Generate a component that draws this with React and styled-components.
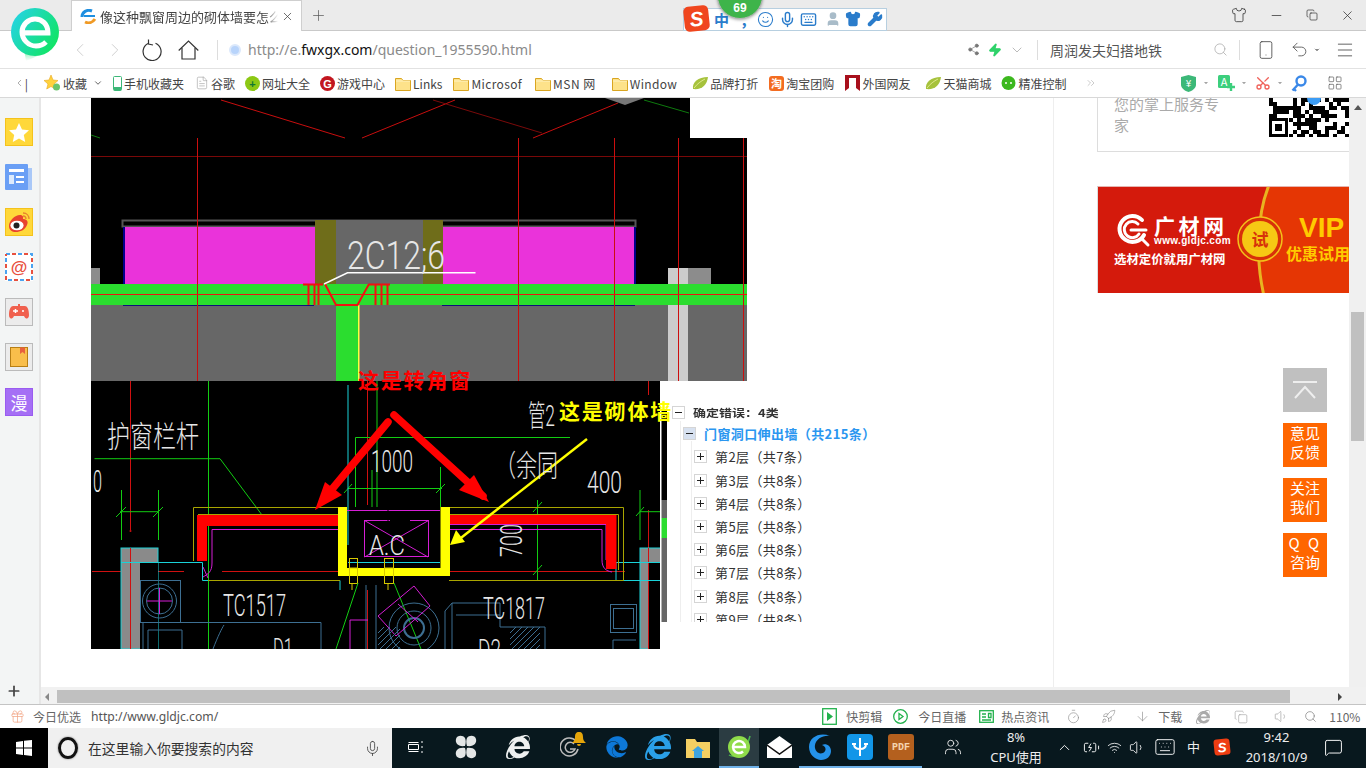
import React from 'react'
import styled, { createGlobalStyle } from 'styled-components'
import {
  ChevronLeft, ChevronRight, Share2, Zap, ChevronDown, Search, Smartphone, Undo2,
  Menu, Mic, Keyboard, Wrench, Shirt, Smile, User, Plus, X, Minus, Copy, Scissors, LayoutGrid,
  Wifi, Volume1, Gift, Timer, Rocket, ArrowDown, Users, MessageSquare, ChevronUp, ChevronsRight,
  BatteryCharging, FileText,
} from 'lucide-react'
import { FaInternetExplorer, FaEdge } from 'react-icons/fa'

const FONT = '"Noto Sans CJK SC", "Noto Sans", sans-serif'

const Global = createGlobalStyle`
html, body { margin: 0; padding: 0; background: #fff; }
body { font-family: ${FONT}; }
* { box-sizing: border-box; }
`

const Window = styled.div`
width: 1366px;
height: 768px;
position: relative;
overflow: hidden;
display: flex;
flex-direction: column;
color: #333;
`

/* ---------- tab strip ---------- */
const TabBar = styled.div`
height: 31px;
flex: none;
background: #ebebeb;
border-bottom: 1px solid #c9c9c9;
display: flex;
align-items: stretch;
padding-left: 71px;
`
const Tab = styled.div`
width: 231px;
height: 31px;
background: #fff;
border: 1px solid #cfcfcf;
border-bottom: none;
display: flex;
align-items: center;
padding-left: 8px;
font-size: 13px;
color: #444;
`
const TabTitle = styled.span`
width: 178px;
margin-left: 3px;
white-space: nowrap;
overflow: hidden;
-webkit-mask-image: linear-gradient(90deg, #000 93%, transparent);
mask-image: linear-gradient(90deg, #000 93%, transparent);
`
const TabClose = styled.span`
margin-left: 3px;
display: flex;
color: #444;
`
const NewTab = styled.span`
margin-left: 8px;
display: flex;
align-items: center;
color: #555;
`
const WinButtons = styled.div`
margin-left: auto;
display: flex;
align-items: center;
gap: 22px;
padding-right: 11px;
color: #333;
`

/* ---------- address bar ---------- */
const AddressBar = styled.div`
height: 37px;
flex: none;
background: #fff;
display: flex;
align-items: center;
`
const NavSlot = styled.span`
flex: none;
width: ${p => p.$w}px;
margin-left: ${p => p.$ml || 0}px;
display: flex;
align-items: center;
justify-content: center;
color: ${p => p.$c || '#444'};
`
const VSep = styled.span`
flex: none;
width: 1px;
height: 20px;
background: #ddd;
margin-left: ${p => p.$ml}px;
`
const GlobeDot = styled.span`
width: 12px;
height: 12px;
margin-left: 11px;
border-radius: 50%;
background: #b8d4fb;
border: 2px solid #dbe8fb;
`
const Url = styled.div`
margin-left: 7px;
width: 310px;
font-family: "Noto Sans", sans-serif;
font-size: 14px;
color: #8a8a8a;
b { font-weight: 400; color: #111; }
`
const SearchText = styled.div`
width: 160px;
margin-left: 12px;
font-size: 14px;
color: #555;
`

/* ---------- bookmarks ---------- */
const BookmarkBar = styled.div`
height: 30px;
flex: none;
background: #fff;
border-top: 1px solid #e2e2e2;
border-bottom: 1px solid #d8d8d8;
display: flex;
align-items: center;
font-size: 12px;
color: #444;
`
const Mark = styled.div`
flex: none;
display: flex;
align-items: center;
gap: 2px;
margin-left: ${p => p.$ml === undefined ? 10 : p.$ml}px;
white-space: nowrap;
letter-spacing: ${p => p.$ls || 0}px;
svg { flex: none; }
`

/* ---------- page body ---------- */
const Body = styled.div`
height: 606px;
flex: none;
display: flex;
`
const SideBar = styled.div`
width: 41px;
flex: none;
background: #f3f5f5;
border-right: 2px solid #e6e6e6;
display: flex;
flex-direction: column;
align-items: flex-start;
padding: 20px 0 0 5px;
gap: 17px;
`
const SideIcon = styled.div`
width: 28px;
height: 28px;
flex: none;
display: flex;
align-items: center;
justify-content: center;
font-size: 17px;
color: #fff;
background: ${p => p.$bg || 'transparent'};
border: ${p => p.$line ? `1px solid ${p.$line}` : 'none'};
`
const SideAdd = styled.div`
margin: auto 0 5px 1px;
display: flex;
color: #444;
`
const MainCol = styled.div`
width: 1325px;
flex: none;
display: flex;
flex-direction: column;
`
const PageRow = styled.div`
height: 589px;
flex: none;
display: flex;
position: relative;
background: #fff;
`
const Article = styled.div`
width: 1013px;
flex: none;
border-right: 1px solid #eee;
padding-left: 50px;
`
const CadStack = styled.div`
position: relative;
width: 900px;
display: flex;
flex-direction: column;
`
const CadImage = styled.svg`
display: block;
flex: none;
background: #000;
`
const CadRow = styled.div`
display: flex;
`
const CadNote = styled.span`
position: absolute;
left: ${p => p.$x}px;
top: ${p => p.$y}px;
font-size: 21px;
line-height: 22px;
font-weight: 700;
letter-spacing: 1.8px;
white-space: nowrap;
color: ${p => p.$c};
`
const CadLabel = styled.text`
font-family: Roboto, "Noto Sans CJK SC", sans-serif;
font-weight: 300;
fill: #e6e6e6;
font-size: ${p => p.$size || 26}px;
`

/* error tree */
const TreePanel = styled.div`
width: 224px;
height: 241px;
overflow: hidden;
background-image: linear-gradient(#eee, #eee), linear-gradient(#eee, #eee);
background-size: 1px 100%;
background-position: 13px 40px, 24px 60px;
background-repeat: no-repeat;
padding-top: 21px;
`
const TreeRow = styled.div`
height: ${p => p.$h}px;
display: flex;
align-items: center;
gap: 8px;
padding-left: ${p => p.$indent}px;
white-space: nowrap;
font-size: 13px;
letter-spacing: .4px;
font-weight: ${p => p.$bold ? 700 : 400};
color: ${p => p.$c || '#333'};
`
const TreeSquat = styled.span`
letter-spacing: 0;
display: inline-block;
transform: scaleY(.8);
`
const TreeBox = styled.span`
width: 13px;
height: 13px;
flex: none;
position: relative;
background: ${p => p.$bg || '#fff'};
border: 1px solid #d5d5d5;
&::before {
  content: '';
  position: absolute;
  left: 2px;
  right: 2px;
  top: 5px;
  height: 1px;
  background: #222;
}
&::after {
  content: '';
  display: ${p => p.$open ? 'none' : 'block'};
  position: absolute;
  top: 2px;
  bottom: 2px;
  left: 5px;
  width: 1px;
  background: #222;
}
`

/* right column */
const SidePane = styled.div`
width: 295px;
flex: none;
padding-left: 43px;
`
const AppCard = styled.div`
height: 54px;
overflow: hidden;
border-left: 1px solid #ddd;
border-bottom: 1px solid #ddd;
display: flex;
justify-content: space-between;
`
const AppText = styled.div`
width: 110px;
margin: -5px 0 0 16px;
font-size: 15px;
line-height: 21px;
color: #aaa;
`
const AdBanner = styled.div`
position: relative;
margin-top: 34px;
height: 107px;
overflow: hidden;
background: #d41a0c;
color: #fff;
border-left: 1px solid #ddd;
border-top: 1px solid #e5b5b0;
`
const AdArt = styled.svg`
position: absolute;
left: 0;
top: 0;
`
const AdBrand = styled.div`
position: absolute;
left: 56px;
top: 26px;
font-size: 21px;
line-height: 24px;
font-weight: 700;
letter-spacing: 3.5px;
`
const AdSite = styled.div`
position: absolute;
left: 56px;
top: 48px;
font-family: "Liberation Sans", sans-serif;
font-size: 10px;
line-height: 12px;
font-weight: 700;
letter-spacing: .35px;
`
const AdSlogan = styled.div`
position: absolute;
left: 16px;
top: 64px;
font-size: 12.4px;
line-height: 16px;
font-weight: 700;
white-space: nowrap;
`
const AdTry = styled.div`
position: absolute;
left: 152px;
top: 41px;
width: 20px;
text-align: center;
font-size: 17px;
line-height: 22px;
font-weight: 700;
color: #d7320a;
`
const AdVip = styled.div`
position: absolute;
left: 201px;
top: 25px;
font-family: "Liberation Sans", sans-serif;
font-size: 28px;
line-height: 32px;
font-weight: 700;
color: #ffcb00;
`
const AdOffer = styled.div`
position: absolute;
left: 188px;
top: 57px;
font-size: 16px;
line-height: 18px;
font-weight: 700;
white-space: nowrap;
color: #ffcb00;
`

const Floater = styled.div`
position: absolute;
left: 1242px;
top: 270px;
width: 44px;
display: flex;
flex-direction: column;
gap: 11px;
`
const FloatButton = styled.div`
height: 44px;
display: flex;
align-items: center;
justify-content: center;
text-align: center;
font-size: 15px;
line-height: 19px;
padding-bottom: ${p => p.$gray ? 0 : 6}px;
color: #fff;
background: ${p => p.$gray ? '#c0c0c0' : '#ff6600'};
`
const QqLine = styled.span`
letter-spacing: 2.5px;
`

const VScroll = styled.div`
width: 17px;
flex: none;
background: #f0f0f0;
display: flex;
flex-direction: column;
align-items: center;
padding-top: 7px;
color: #555;
`
const VThumb = styled.div`
width: 13px;
height: 129px;
margin-top: 202px;
background: #c0c0c0;
`
const HScroll = styled.div`
height: 17px;
flex: none;
background: #f1f1f1;
display: flex;
align-items: center;
padding: 2px 0 0 4px;
color: #666;
`
const HThumb = styled.div`
width: 1233px;
height: 13px;
margin-left: 8px;
background: #c0c0c0;
`
const HArrowEnd = styled.span`
margin-left: 48px;
`
const TriLeft = styled.span`
width: 0;
height: 0;
display: block;
border: 4px solid transparent;
border-right: 4px solid #888;
border-left: none;
`
const TriRight = styled.span`
width: 0;
height: 0;
display: block;
border: 4px solid transparent;
border-left: 4px solid #444;
border-right: none;
`
const TriUp = styled.span`
width: 0;
height: 0;
display: block;
border: 4px solid transparent;
border-bottom: 5px solid #555;
border-top: none;
`

/* ---------- status bar ---------- */
const StatusBar = styled.div`
height: 24px;
flex: none;
background: #fff;
border-top: 1px solid #c4c4c4;
display: flex;
align-items: center;
font-size: 12px;
color: #666;
`
const StatusItem = styled.span`
flex: none;
display: flex;
align-items: center;
margin-left: ${p => p.$ml || 0}px;
white-space: nowrap;
color: ${p => p.$c || 'inherit'};
`
const StatusUrl = styled.span`
font-family: "Noto Sans", sans-serif;
font-size: 12.2px;
color: #555;
`

/* ---------- taskbar ---------- */
const TaskBar = styled.div`
height: 40px;
flex: none;
background: #08181e;
display: flex;
align-items: stretch;
color: #fff;
`
const StartButton = styled.div`
width: 48px;
flex: none;
background: #000;
display: flex;
align-items: center;
justify-content: center;
`
const SearchBox = styled.div`
width: 344px;
flex: none;
background: #f0f0f0;
display: flex;
align-items: center;
padding-left: 10px;
font-size: 13.8px;
color: #333;
`
const Cortana = styled.span`
width: 20px;
height: 22px;
margin-right: 10px;
border-radius: 50%;
border: 3px solid #111;
box-shadow: 0 0 2px #777;
`
const SearchMic = styled.span`
margin-left: auto;
margin-right: 11px;
display: flex;
color: #333;
`
const TaskSlot = styled.div`
position: relative;
width: ${p => p.$w}px;
flex: none;
display: flex;
align-items: center;
justify-content: center;
background: ${p => p.$active ? '#2b3c42' : 'transparent'};
border-bottom: 2px solid ${p => p.$open ? '#6fb1e8' : 'transparent'};
`
const Bell = styled.svg`
position: absolute;
right: 10px;
top: 4px;
`
const TrayText = styled.div`
text-align: center;
font-size: 13px;
line-height: 20px;
color: #eee;
white-space: nowrap;
font-family: "Noto Sans", "Noto Sans CJK SC", sans-serif;
`
const PdfTile = styled.span`
width: 26px;
height: 26px;
border-radius: 3px;
background: #b4601e;
display: flex;
align-items: center;
justify-content: center;
font-family: "Liberation Mono", monospace;
font-size: 10px;
font-weight: 700;
color: #f5d4b0;
`
const SogouTile = styled.span`
width: ${p => p.$s}px;
height: ${p => p.$s}px;
border-radius: ${p => p.$s / 5}px;
transform: rotate(-6deg);
background: ${p => p.$bg || '#ef3d12'};
display: flex;
align-items: center;
justify-content: center;
font-family: "Liberation Sans", sans-serif;
font-weight: 700;
font-style: italic;
font-size: ${p => p.$s * 0.82}px;
color: #fff;
`

/* ---------- things that float over the chrome ---------- */
const AppLogo = styled.svg`
position: absolute;
left: 10px;
top: 6px;
`
const ImeBar = styled.div`
position: absolute;
left: 683px;
top: 8px;
width: 204px;
height: 23px;
background: #fff;
border: 1px solid #b7cfe0;
display: flex;
align-items: center;
color: #2a7ccb;
`
const ImeLogo = styled.span`
position: absolute;
left: 0;
top: -3px;
`
const ImeItem = styled.span`
position: absolute;
left: ${p => p.$x}px;
top: 2px;
display: flex;
font-size: 15px;
line-height: 18px;
font-weight: 700;
color: ${p => p.$c || '#2a7ccb'};
`
const Badge = styled.div`
position: absolute;
left: 717px;
top: -27px;
width: 46px;
height: 46px;
border-radius: 50%;
background: #3eb44a;
border: 1px solid #b8b8b8;
box-shadow: 0 1px 3px rgba(0,0,0,.35);
color: #fff;
font-family: "Liberation Sans", sans-serif;
font-size: 12px;
font-weight: 700;
text-align: center;
padding-top: 27px;
line-height: 14px;
`

/* ---------- small drawings ---------- */
const Folder = () => (
  <svg width="16" height="15" viewBox="0 0 16 15">
    <path d="M.5 2.500h6l1.500 2h7.500v10H.5z" fill="#fde28a" stroke="#d9a520" />
    <path d="M1 5h14" stroke="#fff3c4" />
  </svg>
)
const Leaf = () => (
  <svg width="16" height="14" viewBox="0 0 16 14">
    <path d="M1 13C0 6 6 1 16 1c-1 8-6 13-15 12z" fill="#a6c23c" />
    <path d="M2 12C5 8 9 5 13 3" stroke="#dfe88e" fill="none" />
  </svg>
)
const RoundIcon = ({ bg, c = '#fff', children }) => (
  <svg width="15" height="15" viewBox="0 0 15 15">
    <circle cx="7.500" cy="7.500" r="7.500" fill={bg} />
    <text x="7.500" y="11.500" fontSize="11" fontWeight="700" textAnchor="middle" fill={c} fontFamily="Liberation Sans">{children}</text>
  </svg>
)
const LogoMark = () => (
  <AppLogo width="50" height="58" viewBox="0 0 50 58">
    <defs>
      <linearGradient id="lg" x1="0" y1="0" x2="1" y2=".6">
        <stop offset="0" stopColor="#26d2f0" />
        <stop offset="1" stopColor="#12e468" />
      </linearGradient>
      <linearGradient id="lt" x1="0" y1="0" x2="0" y2="1">
        <stop offset="0" stopColor="#16e070" />
        <stop offset="1" stopColor="#ffffff" />
      </linearGradient>
    </defs>
    <path d="M44 36C38 46 28 50 16 55l-2-12z" fill="url(#lt)" />
    <circle cx="25" cy="26" r="24" fill="url(#lg)" />
    <path d="M13 27h25C38 18 32 13 25 13c-7 0-13 6-13 13s6 14 14 14c5 0 8-2 10-4" fill="none" stroke="#fff" strokeWidth="5" />
    <rect x="12" y="24.500" width="26" height="4" fill="#fff" />
  </AppLogo>
)
const ReloadIcon = () => (
  <svg width="20" height="22" viewBox="0 0 20 22" fill="none" stroke="#333" strokeWidth="1.200">
    <path d="M13.500 4.200A9 9 0 1 1 6 4.500" />
    <path d="M6.500 .5L6.500 5L11 6" />
  </svg>
)
const HomeIcon = () => (
  <svg width="21" height="20" viewBox="0 0 21 20" fill="none" stroke="#333" strokeWidth="1.200">
    <path d="M.7 10.500L10.500 1l9.800 9.500" />
    <path d="M4 8v11h13V8" />
  </svg>
)

/* blocky qr pattern for the app card */
const qrCells = () => {
  const out = []
  let s = 7919
  for (let y = 0; y < 10; y++) {
    for (let x = 0; x < 20; x++) {
      s = (s * 1103515245 + 12345) & 0x7fffffff
      if ((s >> 13) % 2 && !(x < 5 && y > 4)) out.push(<rect key={x + '-' + y} x={x * 4} y={y * 4} width="4" height="4" />)
    }
  }
  return out
}
const QrCode = () => (
  <svg width="80" height="39" viewBox="0 0 80 39" style={{ flex: 'none' }}>
    {qrCells()}
    <rect x="1.500" y="21.500" width="16" height="16" fill="#fff" stroke="#000" strokeWidth="3" />
    <rect x="6" y="26" width="7" height="7" />
    <circle cx="45" cy="0" r="7" fill="#3b9cf5" />
  </svg>
)

const Seg = ({ d, c, w = 1 }) => <path d={d} stroke={c} strokeWidth={w} fill="none" />

const CAD_RED = '#d01010'
const CAD_GREEN = '#12cc12'
const CAD_CYAN = '#1ad2d8'
const CAD_STEEL = '#3d6f92'
const CAD_PINK = '#d51ed5'
const CAD_OLIVE = '#a9a500'

/* upper drawing, page coordinates in the viewBox */
const CadUpper = () => (
  <CadImage width="656" height="283" viewBox="91 98 656 283">
    <rect x="690" y="98" width="57" height="40" fill="#fff" />
    <Seg d="M221 100L345 138M362 138L455 100M533 138L618 103" c="#c80e0e" />
    <Seg d="M433 100L542 133" c="#7a0a0a" />
    <Seg d="M644 100L689 113M91 135L100 138" c="#0e7a0e" />
    <polygon points="605,98 644,98 625,105" fill="#777" />
    <Seg d="M91 156.500H747" c="#7a0808" />

    <rect x="122.500" y="220.500" width="513" height="6" fill="#000" stroke="#555" strokeWidth="2" />
    <rect x="123" y="227" width="192" height="57" fill="#00008b" />
    <rect x="125" y="227" width="190" height="57" fill="#ea33da" />
    <rect x="442" y="227" width="194" height="57" fill="#00008b" />
    <rect x="442" y="227" width="192" height="57" fill="#ea33da" />
    <rect x="336" y="220" width="87" height="64" fill="#676767" />
    <rect x="315" y="220" width="21" height="64" fill="#6f6d1a" />
    <rect x="423" y="220" width="20" height="64" fill="#6f6d1a" />
    <rect x="91" y="268" width="9" height="16" fill="#8c8c8c" />
    <rect x="668" y="268" width="20" height="16" fill="#ccc" />
    <rect x="688" y="268" width="23" height="16" fill="#8c8c8c" />

    <rect x="91" y="305" width="656" height="76" fill="#676767" />
    <Seg d="M123 305.500H314M442 305.500H635" c="#10107a" />
    <rect x="668" y="305" width="20" height="76" fill="#ccc" />
    <rect x="91" y="284" width="656" height="21" fill="#2bdd2f" />
    <rect x="336" y="305" width="22" height="76" fill="#2bdd2f" />
    <rect x="358" y="305" width="1.500" height="76" fill="#ffff40" />

    <Seg d="M197.500 138V381M518.500 138V381M614.500 138V381M678.500 138V381M743.500 138V381" c="#cc0e0e" />
    <Seg d="M91 294.500H747" c="#ee1111" />
    <Seg d="M303 284.500H323M369 284.500H390M308.500 284V305M314.500 284V305M318.500 284V305M375.500 284V305M381.500 284V305M387.500 284V305" c="#f01111" w="2" />
    <Seg d="M325 284L336 305H357.500L369 284" c="#f01111" w="2" />
    <Seg d="M324 284L347.500 272.700H475.500" c="#fff" w="1.600" />
    <CadLabel $size={38} x="347" y="269" textLength="98" lengthAdjust="spacingAndGlyphs">2C12;6</CadLabel>
  </CadImage>
)

const hatch = (x, y, w, h) => {
  const p = []
  for (let i = 0; i < w + h; i += 6) {
    const a = Math.min(i, h)
    const b = Math.max(0, i - h)
    p.push(`M${x + Math.min(i, w)} ${y + Math.max(0, i - w)}L${x + b} ${y + a}`)
  }
  return p.join('')
}

/* lower drawing, page coordinates in the viewBox */
const CadLower = () => (
  <CadImage width="576" height="268" viewBox="91 381 576 268">
    {/* grid lines */}
    <Seg d="M130.500 381V530M367.500 381V505M367.500 590V649M648.500 510V649M648.500 381V395" c={CAD_RED} />
    <circle cx="130.500" cy="531" r="1" fill={CAD_RED} />
    <Seg d="M208.500 381V649" c={CAD_GREEN} />
    <Seg d="M92 571.500H184M222 571.500H340M449 571.500H625" c={CAD_RED} />
    <Seg d="M94.500 458.700H220L262 515" c={CAD_GREEN} />

    {/* dimensions */}
    <Seg d="M355.500 507V437.500H570M440.500 467V507M348 488.500H442M372 470V507M377 381V507" c={CAD_GREEN} />
    <Seg d="M120 511.700H158.500M121.500 490V540M158.500 490V540M640 490V540M640 511.700H661" c={CAD_GREEN} />
    <Seg d="M537.500 500V580M514 507.500H585M116 517L126 507M153 517L163 507M344 493L352 484M436 493L445 484M533 512L542 502M533 575L542 565M636 516L644 507" c={CAD_GREEN} />

    {/* columns */}
    <rect x="121" y="548" width="37" height="101" fill="#8a8a8a" stroke={CAD_CYAN} />
    <rect x="140" y="562" width="18" height="87" fill="#000" />
    <rect x="640" y="548" width="21" height="101" fill="#8a8a8a" stroke={CAD_CYAN} />
    <rect x="648" y="562" width="13" height="87" fill="#000" />
    <Seg d="M130.500 548V649M648.500 548V649" c={CAD_RED} />
    <Seg d="M121 562.500H202.500V580.500H340M348 562.500H440M616 562.500H661M340 580.500V590M449 580.500H625M616 562.500V580.500H661M348 385V545" c={CAD_CYAN} />

    {/* wall outline */}
    <Seg d="M193.500 561V507.500H340M450 507.500H623.500V580.500H449M340 580.500H208" c={CAD_OLIVE} />
    <Seg d="M198 514.500H340M450 514.500H618.500V570" c={CAD_OLIVE} />
    <Seg d="M212 563V529.500H338M450 529.500H602V560C602 568 606 571 612 572M450 524.500H606V560M212 563C212 572 208 574 203 577M203 567L208 578" c={CAD_PINK} />

    {/* red walls */}
    <polygon points="197,515 338,515 338,526 207,526 207,561 197,561" fill="#ff0000" />
    <polygon points="450,515 616.500,515 616.500,569 606,569 606,524 450,524" fill="#ff0000" />

    {/* opening */}
    <rect x="364.500" y="520.500" width="64" height="36" fill="none" stroke={CAD_PINK} />
    <Seg d="M364.500 520.500L428 557M364.500 557L428.500 520.500M347 510.500H440" c={CAD_PINK} />
    <Seg d="M388 524V507M390 520.500H410" c="#000" />
    <polygon points="338,507 347,507 347,568 440.500,568 440.500,507 450,507 450,576 338,576" fill="#ffff00" />
    <rect x="349.500" y="558.500" width="8" height="25" fill="none" stroke="#d6c800" />
    <rect x="384.500" y="558.500" width="9" height="25" fill="none" stroke="#d6c800" />
    <Seg d="M349.500 568H357.500M384.500 568H393.500" c="#d6c800" />
    <Seg d="M352 584V590M388 584V590" c="#d6c800" />
    <CadLabel $size={28} x="369" y="555" textLength="36" lengthAdjust="spacingAndGlyphs">A.C</CadLabel>

    {/* lower plan */}
    <rect x="140.500" y="580.500" width="40" height="42" fill="none" stroke={CAD_STEEL} />
    <circle cx="159.500" cy="601" r="17" fill="none" stroke={CAD_STEEL} />
    <circle cx="159.500" cy="601" r="13" fill="none" stroke={CAD_STEEL} />
    <Seg d="M147 601H172M159.500 588V614" c={CAD_PINK} />
    <Seg d="M143 649V622.500H321V649M148 649V630H182V649M213 649C218 636 222 628 224 625" c={CAD_STEEL} />
    <Seg d="M358 583L336 649M394 583L421 649" c={CAD_GREEN} />
    <Seg d="M366 585V649M376 585V649" c={CAD_STEEL} />
    <Seg d="M350 620H368M350 649V620" c={CAD_PINK} />
    <circle cx="414" cy="628" r="25" fill="none" stroke={CAD_STEEL} />
    <circle cx="414" cy="628" r="17" fill="none" stroke={CAD_STEEL} />
    <circle cx="414" cy="628" r="10" fill="none" stroke={CAD_STEEL} strokeWidth="2" />
    <Seg d="M378 616L414 586L430 606L396 636zM398 604L418 622" c={CAD_PINK} />
    <Seg d={hatch(378, 627, 22, 22)} c={CAD_STEEL} />
    <Seg d={hatch(510, 627, 30, 22)} c={CAD_STEEL} />
    <Seg d="M445 649V611L452 603H500V627H545V649M452 603V649M456 615H500" c={CAD_STEEL} />
    <rect x="610.500" y="604.500" width="26" height="28" fill="none" stroke={CAD_STEEL} />
    <rect x="613.500" y="608.500" width="20" height="20" fill="none" stroke={CAD_STEEL} />
    <Seg d="M613 649V640H636" c={CAD_STEEL} />

    {/* hand drawn arrows */}
    <g stroke="#ff0000" strokeWidth="7.500" strokeLinecap="round" fill="none">
      <path d="M388 422L323 500" />
      <path d="M394 415L483 496" />
    </g>
    <polygon points="315,510 325,482 342,495" fill="#ff0000" />
    <polygon points="489,502 474,475 459,490" fill="#ff0000" />
    <path d="M587 439L457 541" stroke="#ffff00" strokeWidth="2.500" />
    <polygon points="450,545 456,530 465,542" fill="#ffff00" />

    {/* cad labels */}
    <CadLabel $size={30} x="107" y="447" textLength="92" lengthAdjust="spacingAndGlyphs">护窗栏杆</CadLabel>
    <CadLabel $size={31} x="93" y="492" textLength="9" lengthAdjust="spacingAndGlyphs">0</CadLabel>
    <CadLabel $size={32} x="371" y="472" textLength="42" lengthAdjust="spacingAndGlyphs">1000</CadLabel>
    <CadLabel $size={30} x="495" y="476" textLength="63" lengthAdjust="spacingAndGlyphs">（余同</CadLabel>
    <CadLabel $size={32} x="587" y="493" textLength="35" lengthAdjust="spacingAndGlyphs">400</CadLabel>
    <CadLabel $size={30} x="528" y="426" textLength="27" lengthAdjust="spacingAndGlyphs">管2</CadLabel>
    <CadLabel $size={32} transform="translate(522 557) rotate(-90)" textLength="33" lengthAdjust="spacingAndGlyphs">700</CadLabel>
    <CadLabel $size={32} x="223" y="616" textLength="63" lengthAdjust="spacingAndGlyphs">TC1517</CadLabel>
    <CadLabel $size={32} x="483" y="619" textLength="62" lengthAdjust="spacingAndGlyphs">TC1817</CadLabel>
    <CadLabel $size={30} x="273" y="659" textLength="20" lengthAdjust="spacingAndGlyphs">D1</CadLabel>
    <CadLabel $size={30} x="478" y="660" textLength="23" lengthAdjust="spacingAndGlyphs">D2</CadLabel>

    {/* piece of the next picture */}
    <rect x="661" y="381" width="6" height="28" fill="#fff" />
    <rect x="661" y="622" width="6" height="27" fill="#fff" />
    <rect x="661" y="500" width="6" height="122" fill="#666" />
    <rect x="661" y="518" width="6" height="20" fill="#2bdd2f" />
    <rect x="660" y="381" width="1.500" height="268" fill="#fff" />
  </CadImage>
)

const AdPattern = () => (
  <AdArt width="252" height="107" viewBox="0 0 252 107">
    <path d="M171 -2C158 30 158 75 166 109H252V-2z" fill="#e53604" />
    <path d="M171 -2C158 30 158 75 166 109" fill="none" stroke="#e8b420" strokeWidth="3" />
    <circle cx="162" cy="52" r="22" fill="#d8300a" stroke="#f3c21a" strokeWidth="1.500" />
    <circle cx="162" cy="52" r="18" fill="#f6c814" />
    <g fill="none" stroke="#fff" strokeLinecap="round">
      <path d="M44 33A13 13 0 1 0 46 48" strokeWidth="4" />
      <path d="M40 37A8 8 0 1 0 41 47" strokeWidth="3" />
      <path d="M33 43H48" strokeWidth="3" />
      <path d="M44 52L50 58" strokeWidth="3" />
    </g>
  </AdArt>
)

const MiniWeibo = () => (
  <svg width="24" height="22" viewBox="0 0 24 22">
    <path d="M2 15C2 9 9 3 14 4c3 1 2 3 2 4 3 0 6 2 4 6-2 5-7 7-11 7-4 0-7-2-7-6z" fill="#e8432e" />
    <ellipse cx="10" cy="14.500" rx="6.600" ry="4.800" fill="#fff" />
    <circle cx="9.500" cy="14.500" r="3" fill="#222" />
    <path d="M16 2c4 0 6 3 6 6M16 5c2 0 3 1 3 3" stroke="#e8832e" strokeWidth="1.300" fill="none" />
  </svg>
)

const FLOORS = [['第2层', 7], ['第3层', 8], ['第4层', 8], ['第5层', 8], ['第6层', 8], ['第7层', 8], ['第8层', 8], ['第9层', 8]]

const App = () => {
  return (
    <Window>
      <Global />

      <TabBar>
        <Tab>
          <svg width="17" height="15" viewBox="0 0 17 15" style={{ flex: 'none' }}>
            <path d="M2 8C2 3 7 0 12 2" stroke="#1f8fe0" strokeWidth="3" fill="none" />
            <path d="M5 13c4 2 8 0 10-3" stroke="#f09a25" strokeWidth="3" fill="none" />
            <path d="M4 7h11" stroke="#1f8fe0" strokeWidth="2" />
          </svg>
          <TabTitle>像这种飘窗周边的砌体墙要怎么画</TabTitle>
          <TabClose><X size={13} strokeWidth={1.400} /></TabClose>
        </Tab>
        <NewTab><Plus size={17} strokeWidth={1} /></NewTab>
        <WinButtons>
          <Shirt size={16} strokeWidth={1.200} />
          <Minus size={15} strokeWidth={1.200} />
          <Copy size={12} strokeWidth={1.400} />
          <X size={15} strokeWidth={1.200} />
        </WinButtons>
      </TabBar>

      <AddressBar>
        <NavSlot $w={24} $ml={68} $c="#ccc"><ChevronLeft size={22} strokeWidth={1} /></NavSlot>
        <NavSlot $w={24} $ml={11} $c="#ccc"><ChevronRight size={22} strokeWidth={1} /></NavSlot>
        <NavSlot $w={24} $ml={13}><ReloadIcon /></NavSlot>
        <NavSlot $w={24} $ml={12}><HomeIcon /></NavSlot>
        <VSep $ml={17} />
        <GlobeDot />
        <Url>http://e.<b>fwxgx.com</b>/question_1955590.html</Url>
        <NavSlot $w={18} $ml={406} $c="#777"><Share2 size={13} fill="#777" strokeWidth={1.200} /></NavSlot>
        <NavSlot $w={18} $ml={4} $c="#2fd26a"><Zap size={14} fill="#2fd26a" /></NavSlot>
        <NavSlot $w={18} $ml={4} $c="#999"><ChevronDown size={16} strokeWidth={1} /></NavSlot>
        <VSep $ml={11} />
        <SearchText>周润发夫妇搭地铁</SearchText>
        <NavSlot $w={18} $ml={1} $c="#aaa"><Search size={15} strokeWidth={1.200} /></NavSlot>
        <VSep $ml={10} />
        <NavSlot $w={20} $ml={16}><Smartphone size={20} strokeWidth={1} /></NavSlot>
        <NavSlot $w={22} $ml={12}><Undo2 size={19} strokeWidth={1} /></NavSlot>
        <NavSlot $w={8} $ml={3} $c="#888"><ChevronDown size={8} fill="#888" /></NavSlot>
        <NavSlot $w={22} $ml={13}><Menu size={20} strokeWidth={1} /></NavSlot>
      </AddressBar>

      <BookmarkBar>
        <NavSlot $w={14} $ml={14}><ChevronLeft size={14} strokeWidth={1} /><span>|</span></NavSlot>
        <Mark $ml={16}>
          <svg width="17" height="16" viewBox="0 0 17 16"><path d="M7 0l2 5 5 .5-4 3.500 1.300 5L7 11.500 2.700 14 4 9 0 5.500 5 5z" fill="#ffd23c" stroke="#e8a820" strokeWidth=".6" /><circle cx="12.500" cy="12" r="3.500" fill="#6ac46a" /></svg>
          收藏<ChevronDown size={10} style={{ marginLeft: 4 }} />
        </Mark>
        <Mark $ml={10}>
          <svg width="9" height="15" viewBox="0 0 9 15"><rect x=".5" y=".5" width="8" height="14" rx="1" fill="#fff" stroke="#3cb878" /><rect x="1" y="11" width="7" height="3.500" fill="#3cb878" /></svg>
          手机收藏夹
        </Mark>
        <Mark $ml={11}><FileText size={14} strokeWidth={1} color="#999" />谷歌</Mark>
        <Mark><RoundIcon bg="#8cc814" c="#173">+</RoundIcon>网址大全</Mark>
        <Mark><RoundIcon bg="#c2161f">G</RoundIcon>游戏中心</Mark>
        <Mark><Folder />Links</Mark>
        <Mark $ml={11} $ls={0.35}><Folder />Microsof</Mark>
        <Mark $ml={13} $ls={0.5}><Folder />MSN 网</Mark>
        <Mark $ml={16} $ls={0.35}><Folder />Window</Mark>
        <Mark $ml={15}><Leaf />品牌打折</Mark>
        <Mark $ml={11}>
          <svg width="15" height="15" viewBox="0 0 15 15"><rect width="15" height="15" rx="3" fill="#f36c21" /><text x="7.500" y="12" fontSize="11" fontWeight="700" textAnchor="middle" fill="#fff">淘</text></svg>
          淘宝团购
        </Mark>
        <Mark $ml={11}>
          <svg width="15" height="16" viewBox="0 0 15 16"><path d="M0 0h15v16L11 13V3H4v10L0 16z" fill="#a8101c" /></svg>
          外国网友
        </Mark>
        <Mark $ml={15}><Leaf />天猫商城</Mark>
        <Mark>
          <svg width="15" height="15" viewBox="0 0 15 15"><circle cx="7.500" cy="7" r="7" fill="#3cb81e" /><path d="M3 13l1-3 3 2z" fill="#3cb81e" /><circle cx="5" cy="7" r="1" fill="#fff" /><circle cx="10" cy="7" r="1" fill="#fff" /></svg>
          精准控制
        </Mark>
        <NavSlot $w={12} $ml={19} $c="#999"><ChevronsRight size={12} strokeWidth={1} /></NavSlot>
        <NavSlot $w={16} $ml={83} $c="#3cb878">
          <svg width="15" height="17" viewBox="0 0 15 17"><path d="M0 2L7.500 0 15 2v8c0 3-4 6-7.500 7C4 16 0 13 0 10z" fill="#3cb878" /><text x="7.500" y="12" fontSize="10" textAnchor="middle" fill="#fff">¥</text></svg>
        </NavSlot>
        <NavSlot $w={6} $ml={7} $c="#888"><ChevronDown size={8} fill="#888" /></NavSlot>
        <NavSlot $w={17} $ml={9}>
          <svg width="17" height="17" viewBox="0 0 17 17"><rect width="12" height="13" rx="1.500" fill="#3ccf7d" /><text x="6" y="11" fontSize="11" textAnchor="middle" fill="#fff">A</text><path d="M9 12h8M13 8v8" stroke="#3ccf7d" strokeWidth="2.400" /></svg>
        </NavSlot>
        <NavSlot $w={6} $ml={6} $c="#888"><ChevronDown size={8} fill="#888" /></NavSlot>
        <NavSlot $w={16} $ml={8} $c="#f0625a"><Scissors size={16} strokeWidth={2} style={{ transform: 'rotate(-90deg)' }} /></NavSlot>
        <NavSlot $w={6} $ml={6} $c="#888"><ChevronDown size={8} fill="#888" /></NavSlot>
        <NavSlot $w={16} $ml={8}>
          <svg width="16" height="17" viewBox="0 0 16 17" fill="none" stroke="#3a88e8"><circle cx="10" cy="6" r="4.500" strokeWidth="2.400" /><path d="M7 9.500L1.500 15.500M3 14l2 2" strokeWidth="2.400" /></svg>
        </NavSlot>
        <NavSlot $w={16} $ml={20} $c="#555"><LayoutGrid size={16} strokeWidth={1} /></NavSlot>
      </BookmarkBar>

      <Body>
        <SideBar>
          <SideIcon $bg="#ffd83a" $line="#f4c21c">
            <svg width="20" height="19" viewBox="0 0 20 19"><path d="M10 0l3 6.500 7 .8-5.200 4.700L16.200 19 10 15.500 3.800 19l1.400-7L0 7.300l7-.8z" fill="#fff" /></svg>
          </SideIcon>
          <SideIcon>
            <svg width="28" height="27" viewBox="0 0 28 27"><rect x="20" y="4" width="7" height="22" fill="#a9c8f8" /><rect y="0" width="23" height="26" rx="1" fill="#6a9ff5" /><rect x="4" y="5" width="15" height="3" fill="#fff" /><rect x="4" y="11" width="5" height="9" fill="#dceafc" /><rect x="11" y="12" width="8" height="2" fill="#fff" /><rect x="11" y="17" width="8" height="2" fill="#fff" /></svg>
          </SideIcon>
          <SideIcon $bg="#ffd83a" $line="#f4c21c"><MiniWeibo /></SideIcon>
          <SideIcon $bg="#fff">
            <svg width="28" height="28" viewBox="0 0 28 28">
              <rect x="1" y="1" width="26" height="26" fill="none" stroke="#4aa3f0" strokeWidth="2" strokeDasharray="4 8" />
              <rect x="1" y="1" width="26" height="26" fill="none" stroke="#e8503e" strokeWidth="2" strokeDasharray="4 8" strokeDashoffset="6" />
              <text x="14" y="20" fontSize="17" fontWeight="700" textAnchor="middle" fill="#e8503e" fontFamily="Liberation Sans">@</text>
            </svg>
          </SideIcon>
          <SideIcon $bg="#ececec" $line="#bbb">
            <svg width="20" height="16" viewBox="0 0 20 16"><path d="M9 2V0h2v2h5c2 0 4 3 4 9 0 4-3 5-5 1H5c-2 4-5 3-5-1C0 5 2 2 4 2z" fill="#f0604e" /><path d="M4 7h5M6.500 5v4M13 7h2" stroke="#fff" strokeWidth="1.500" /></svg>
          </SideIcon>
          <SideIcon $bg="#ececec" $line="#bbb">
            <svg width="18" height="20" viewBox="0 0 18 20"><rect x=".5" y=".5" width="17" height="19" fill="#f9be4b" stroke="#b87f14" /><path d="M10 .5h5V7l-2.500-2L10 7z" fill="#e8603e" /></svg>
          </SideIcon>
          <SideIcon $bg="#a56ff5" $line="#9a5cf0">漫</SideIcon>
          <SideAdd><Plus size={16} strokeWidth={2.600} /></SideAdd>
        </SideBar>

        <MainCol>
          <PageRow>
            <Article>
              <CadStack>
                <CadUpper />
                <CadRow>
                  <CadLower />
                  <TreePanel>
                    <TreeRow $h={20} $indent={5} $bold>
                      <TreeBox $open /><TreeSquat>确定错误：4类</TreeSquat>
                    </TreeRow>
                    <TreeRow $h={23.400} $indent={16} $bold $c="#2a96f0">
                      <TreeBox $open $bg="#d7e1f0" />门窗洞口伸出墙（共215条）
                    </TreeRow>
                    {FLOORS.map(([name, n]) => (
                      <TreeRow key={name} $h={23.200} $indent={27}>
                        <TreeBox />{name}（共{n}条）
                      </TreeRow>
                    ))}
                  </TreePanel>
                </CadRow>
                <CadNote $x={267} $y={270} $c="#ff0000">这是转角窗</CadNote>
                <CadNote $x={468} $y={301} $c="#ffff00">这是砌体墙</CadNote>
              </CadStack>
            </Article>
            <SidePane>
              <AppCard>
                <AppText>您的掌上服务专家</AppText>
                <QrCode />
              </AppCard>
              <AdBanner>
                <AdPattern />
                <AdBrand>广材网</AdBrand>
                <AdSite>www.gldjc.com</AdSite>
                <AdSlogan>选材定价就用广材网</AdSlogan>
                <AdTry>试</AdTry>
                <AdVip>VIP</AdVip>
                <AdOffer>优惠试用</AdOffer>
              </AdBanner>
            </SidePane>
            <Floater>
              <FloatButton $gray>
                <svg width="26" height="18" viewBox="0 0 26 18"><path d="M1 1h24M3 17L13 6l10 11" fill="none" stroke="#eee" strokeWidth="2" /></svg>
              </FloatButton>
              <FloatButton>意见<br />反馈</FloatButton>
              <FloatButton>关注<br />我们</FloatButton>
              <FloatButton><span><QqLine>Q Q</QqLine><br />咨询</span></FloatButton>
            </Floater>
            <VScroll>
              <TriUp />
              <VThumb />
            </VScroll>
          </PageRow>
          <HScroll>
            <TriLeft />
            <HThumb />
            <HArrowEnd><TriRight /></HArrowEnd>
          </HScroll>
        </MainCol>
      </Body>

      <StatusBar>
        <StatusItem $ml={10} $c="#f2a585"><Gift size={15} strokeWidth={1.200} /></StatusItem>
        <StatusItem $ml={8}>今日优选</StatusItem>
        <StatusItem $ml={10}><StatusUrl>http://www.gldjc.com/</StatusUrl></StatusItem>
        <StatusItem $ml={604}>
          <svg width="15" height="17" viewBox="0 0 15 17" fill="none" stroke="#23b14d" strokeWidth="1.300"><rect x=".7" y=".7" width="13.600" height="15.600" /><path d="M5 4l6 4.500L5 13z" fill="#23b14d" stroke="none" /></svg>
        </StatusItem>
        <StatusItem $ml={9}>快剪辑</StatusItem>
        <StatusItem $ml={11}>
          <svg width="15" height="15" viewBox="0 0 15 15" fill="none" stroke="#23b14d" strokeWidth="1.300"><circle cx="7.500" cy="7.500" r="6.800" /><path d="M6 4.500l4 3-4 3z" /></svg>
        </StatusItem>
        <StatusItem $ml={10}>今日直播</StatusItem>
        <StatusItem $ml={13}>
          <svg width="15" height="15" viewBox="0 0 15 15" fill="none" stroke="#23b14d" strokeWidth="1.300"><rect x=".7" y="1.700" width="13.600" height="11.600" /><path d="M3 5h4M3 8h4M3 11h9M9.500 4.500h2.500v4H9.500z" /></svg>
        </StatusItem>
        <StatusItem $ml={7}>热点资讯</StatusItem>
        <StatusItem $ml={17} $c="#888"><Timer size={15} strokeWidth={1} /></StatusItem>
        <StatusItem $ml={20} $c="#888"><Rocket size={15} strokeWidth={1} /></StatusItem>
        <StatusItem $ml={19} $c="#888"><ArrowDown size={15} strokeWidth={1} /></StatusItem>
        <StatusItem $ml={8}>下载</StatusItem>
        <StatusItem $ml={14} $c="#aaa"><FaInternetExplorer size={14} /></StatusItem>
        <StatusItem $ml={24} $c="#999"><Copy size={14} strokeWidth={1} /></StatusItem>
        <StatusItem $ml={26} $c="#999"><Volume1 size={15} strokeWidth={1} /></StatusItem>
        <StatusItem $ml={15} $c="#777"><Search size={13} strokeWidth={1.200} /></StatusItem>
        <StatusItem $ml={12}>110%</StatusItem>
      </StatusBar>

      <TaskBar>
        <StartButton>
          <svg width="16" height="16" viewBox="0 0 16 16"><path d="M0 2l7-1v6.500H0zM8 .8L16 0v7.500H8zM0 8.500h7V15l-7-1zM8 8.500h8V16l-8-1z" fill="#fff" /></svg>
        </StartButton>
        <SearchBox>
          <Cortana />
          在这里输入你要搜索的内容
          <SearchMic><Mic size={17} strokeWidth={1.100} /></SearchMic>
        </SearchBox>
        <TaskSlot $w={48}>
          <svg width="16" height="16" viewBox="0 0 16 16" fill="none" stroke="#fff"><path d="M.5 3.500h10M.5 12.500h10M.5 5.500h10v5H.5zM14 2v2M14 7v2M14 12v2" /></svg>
        </TaskSlot>
        <TaskSlot $w={52}>
          <svg width="22" height="24" viewBox="0 0 22 24" fill="#e4e6e6"><path d="M10 11C3 12 0 8 1 4c1-4 7-4 9-1 1 2 1 5 0 8zM12 11c-1-3-1-6 0-8 2-3 8-3 9 1 1 4-2 8-9 7zM10 13c1 3 1 6 0 8-2 3-8 3-9-1-1-4 2-8 9-7zM12 13c7-1 10 3 9 7-1 4-7 4-9 1-1-2-1-5 0-8z" /></svg>
        </TaskSlot>
        <TaskSlot $w={52}><FaInternetExplorer size={24} color="#eef0f0" /></TaskSlot>
        <TaskSlot $w={52}>
          <svg width="20" height="20" viewBox="0 0 20 20" fill="none" stroke="#bbb" strokeWidth="1.500"><path d="M16 4A9 9 0 1 0 18 12M14 7A5 5 0 1 0 15 12H10" /></svg>
          <Bell width="14" height="15" viewBox="0 0 14 15"><path d="M7 0c3 0 4 2 4 5s1 4 3 6H0c2-2 3-3 3-6s1-5 4-5zM5 12h4a2 2 0 0 1-4 0z" fill="#e5a50a" /></Bell>
        </TaskSlot>
        <TaskSlot $w={42}><FaEdge size={22} color="#0d78d8" /></TaskSlot>
        <TaskSlot $w={39}><FaInternetExplorer size={26} color="#2aa0e8" /></TaskSlot>
        <TaskSlot $w={42}>
          <svg width="24" height="22" viewBox="0 0 24 22"><path d="M0 3h9l2 3h13v16H0z" fill="#f4cf62" /><path d="M8 15h8v7H8z" fill="#3da3e0" /><path d="M6 15l6-5 6 5z" fill="#3da3e0" /></svg>
        </TaskSlot>
        <TaskSlot $w={40} $active $open>
          <svg width="24" height="28" viewBox="0 0 24 28"><path d="M2 22C8 26 20 16 23 3" stroke="#4bb84f" strokeWidth="1.500" fill="none" /><circle cx="12" cy="14" r="11" fill="#8fdc4a" /><path d="M6 14h12a6 6 0 1 0-2 4.500" stroke="#fff" strokeWidth="2.500" fill="none" /></svg>
        </TaskSlot>
        <TaskSlot $w={40}>
          <svg width="25" height="22" viewBox="0 0 25 22"><path d="M0 9L12.500 0 25 9v13H0z" fill="#fff" /><path d="M0 9l12.500 9L25 9" stroke="#111" strokeWidth="1.500" fill="none" /></svg>
        </TaskSlot>
        <TaskSlot $w={41} $open>
          <svg width="24" height="28" viewBox="0 0 24 28"><path d="M22 3C12-1 1 4 1 14c0 8 7 13 12 13 6 0 10-4 10-9s-5-8-9-6c4 1 5 6 1 8-5 2-9-3-8-8 1-6 8-10 15-9z" fill="#2492ea" /></svg>
        </TaskSlot>
        <TaskSlot $w={40} $open>
          <svg width="26" height="26" viewBox="0 0 26 26"><rect width="26" height="26" rx="4" fill="#1296e8" /><path d="M13 4v18M7 10c0 4 3 5 6 5s6-1 6-5M5 10h4M17 10h4" stroke="#fff" strokeWidth="2" fill="none" /></svg>
        </TaskSlot>
        <TaskSlot $w={42} $open><PdfTile>PDF</PdfTile></TaskSlot>
        <TaskSlot $w={62}><Users size={18} strokeWidth={1.200} color="#eee" /></TaskSlot>
        <TaskSlot $w={64}>
          <TrayText>8%<br />CPU使用</TrayText>
        </TaskSlot>
        <TaskSlot $w={32}><ChevronUp size={17} strokeWidth={1.300} /></TaskSlot>
        <TaskSlot $w={22}><BatteryCharging size={17} strokeWidth={1.300} /></TaskSlot>
        <TaskSlot $w={24}><Wifi size={15} strokeWidth={1.300} /></TaskSlot>
        <TaskSlot $w={23}><Volume1 size={17} strokeWidth={1.200} /></TaskSlot>
        <TaskSlot $w={31}><Keyboard size={22} strokeWidth={1} /></TaskSlot>
        <TaskSlot $w={27}><TrayText>中</TrayText></TaskSlot>
        <TaskSlot $w={30}><SogouTile $s={16}>S</SogouTile></TaskSlot>
        <TaskSlot $w={79}><TrayText>9:42<br />2018/10/9</TrayText></TaskSlot>
        <TaskSlot $w={34}><MessageSquare size={19} strokeWidth={1.200} /></TaskSlot>
      </TaskBar>

      <LogoMark />
      <ImeBar>
        <ImeLogo><SogouTile $s={25} $bg="#f0461e">S</SogouTile></ImeLogo>
        <ImeItem $x={30}>中</ImeItem>
        <ImeItem $x={56} $c="#2a7ccb">，</ImeItem>
        <ImeItem $x={73}><Smile size={17} strokeWidth={1.500} /></ImeItem>
        <ImeItem $x={95}><Mic size={17} strokeWidth={2} /></ImeItem>
        <ImeItem $x={116}><Keyboard size={17} strokeWidth={2} /></ImeItem>
        <ImeItem $x={141} $c="#a9bcc9"><User size={16} fill="#a9bcc9" /></ImeItem>
        <ImeItem $x={161}><Shirt size={16} fill="#2a7ccb" /></ImeItem>
        <ImeItem $x={183}><Wrench size={16} fill="#2a7ccb" /></ImeItem>
      </ImeBar>
      <Badge>69</Badge>
    </Window>
  )
}

export default App
